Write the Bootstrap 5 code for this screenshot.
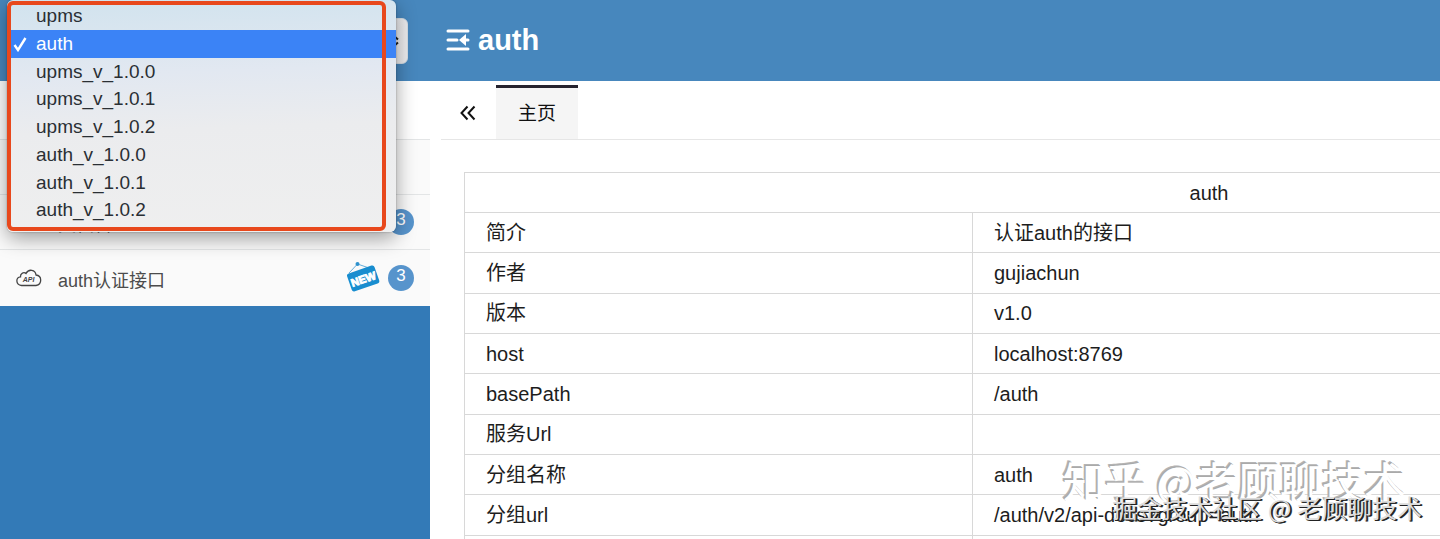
<!DOCTYPE html>
<html lang="zh-CN">
<head>
<meta charset="utf-8">
<meta name="viewport" content="width=device-width, initial-scale=1">
<title>auth</title>
<link href="https://cdn.jsdelivr.net/npm/bootstrap@5.3.0/dist/css/bootstrap.min.css" rel="stylesheet">
<style>
  body { font-family: "Liberation Sans", "Noto Sans CJK SC", sans-serif; font-size: 20px; line-height: 28px; color: #1d1d1d; background: #fff; }
  .topbar { height: 81px; background: #4787bd; }
  .brand-side, .side { width: 430px; flex: none; }
  .group-select { appearance: none; width: 388px; height: 46px; margin-left: 20px; font-size: 19px; border: 1px solid #d5dde4; border-radius: 6px;
    background: linear-gradient(90deg, #d4d4d6, #ececee); }
  .select-arrows { right: 31px; top: 17px; }
  .title-text { font-size: 29px; line-height: 36px; color: #fff; padding-bottom: 2px; }
  .side { background: #337ab7; }
  .side-item { height: 55px; padding: 0 16px; font-size: 18px; color: #4c4c4c; background: #fafafa; border: 0; border-bottom: 1px solid #e3e5e6; text-decoration: none; }
  .side-item.search-row { height: 59px; background: #fff; }
  .side-item:last-child { height: 56px; border-bottom: 0; }
  .side-item .label-text { margin-left: 16px; padding-top: 6px; }
  .count { width: 26px; height: 26px; line-height: 22px; font-size: 17px; font-weight: 400; padding: 0; background: #5794cc; }
  .group-menu { left: 7px; top: 0; width: 389px; height: 232px; padding: 2px 0 8px 4px; z-index: 5; border-radius: 6px;
    background: linear-gradient(178deg, #d1e3ee 0, #e2e8f1 32%, #ebecee 55%, #efefef 100%); box-shadow: 0 6px 20px rgba(0,0,0,.38), 0 0 2px rgba(0,0,0,.35); }
  .group-menu .options { min-height: 222px; grid-auto-rows: 1fr; }
  .group-menu button { border: 0; background: none; padding: 0; font-size: 19px; line-height: 27px; color: #2a2f34; text-align: left; }
  .group-menu button.picked { background: #3b83f6; color: #fff; }
  .tick { width: 25px; padding-left: 2px; flex: none; }
  .frame { left: 0; top: 1px; width: 379px; bottom: 1px; border: 4px solid #e8481c; border-radius: 6px; pointer-events: none; }
  .tabs { height: 59px; padding: 4px 0 0 30px; }
  .tabs::after { content: ""; position: absolute; left: 11px; right: 0; bottom: 0; height: 1px; background: #e6e6e6; }
  .collapse-btn { border: 0; background: none; padding: 0; width: 16px; height: 52px; }
  .tab-home { height: 55px; margin-left: 20px; width: 82px; border: 0; border-top: 3px solid #26232e; background: #f5f5f5; font-size: 19px; color: #111; padding: 0; }
  .content-area { padding: 32px 0 0 34px; }
  .info { min-width: 1490px; height: 404px; table-layout: fixed; border-collapse: collapse; margin: 0; color: #1d1d1d; }
  .info td, .info th { border: 1px solid #d8d8d8; padding: 5px 21px; font-weight: 400; vertical-align: middle; height: 40px; }
  .info col.key { width: 508px; }
  .wm-a, .wm-b { white-space: nowrap; pointer-events: none; font-family: "Noto Sans CJK SC", sans-serif; }
  .wm-a { right: 34px; bottom: 38px; font-size: 42px; line-height: 42px; color: #fff; text-shadow: -1px -1px 0 #aaa, -2px -2px 0 #b4b4b4; }
  .wm-b { right: 18px; bottom: 18px; font-size: 25px; line-height: 28px; color: #ddd; text-shadow: 1px 1px 0 #222, 2px 1px 0 #333; }
</style>
</head>
<body class="vh-100 overflow-hidden d-flex flex-column position-relative">
<header class="topbar d-flex align-items-center flex-shrink-0">
  <div class="brand-side position-relative">
    <select class="group-select" aria-label="分组"><option>auth</option></select>
    <svg class="select-arrows position-absolute" width="10" height="12" viewBox="0 0 10 12" fill="none" stroke="#222" stroke-width="2"><path d="M1 4.500 5 1l4 3.500M1 7.500 5 11l4-3.500"/></svg>
  </div>
  <h1 class="d-flex align-items-center gap-2 m-0 fw-bold title-text ps-3">
    <svg width="24" height="22" viewBox="0 0 24 22" fill="none" stroke="#fff" stroke-width="3" stroke-linecap="round"><path d="M2 2h20M2 11h9M2 20h20M17 11h5"/><path fill="#fff" stroke="none" d="M13 11l7-6v12z"/></svg>
    auth
  </h1>
</header>
<div class="d-flex flex-grow-1 overflow-hidden">
  <nav class="side" aria-label="菜单">
    <div class="side-item search-row"></div>
    <div class="side-item"></div>
    <a href="#" class="side-item d-flex align-items-center">
      <svg width="26" height="22" viewBox="0 0 26 22" fill="none" stroke="#444" stroke-width="2"><path d="M1 3v16h10M1 3h20v4"/><circle cx="19" cy="16" r="4" stroke-dasharray="3 2"/></svg>
      <span class="label-text">文档管理</span><span class="badge rounded-circle count ms-auto">3</span>
    </a>
    <a href="#" class="side-item d-flex align-items-center">
      <svg width="26" height="18" viewBox="0 0 26 18"><path fill="none" stroke="#444" stroke-width="1.300" d="M5.500 16.500C-.5 16-.5 8 4.500 7.800 4.200 4 8 2.700 10 4.500 12.500-.5 19.500.5 20 6c6 .500 6.500 9.500 0 10.500z"/><text x="12.500" y="13" text-anchor="middle" font-size="7" font-weight="700" font-style="italic" font-family="Liberation Sans, sans-serif" fill="#444">API</text></svg>
      <span class="label-text">auth认证接口</span>
      <svg class="ms-auto" width="34" height="34" viewBox="0 0 34 34"><path d="M3 12 11.500 3 26 8" fill="none" stroke="#65aedb" stroke-width="1"/><circle cx="11.500" cy="3" r="2" fill="#2e91cd"/><g transform="rotate(-19 17 17)"><rect x="2.500" y="8" width="29" height="19" rx="2.500" fill="#188dcf"/><text x="17" y="22" text-anchor="middle" font-size="11" font-weight="700" font-family="Liberation Sans, sans-serif" fill="#fff" stroke="#fff" stroke-width=".9">NEW</text></g></svg>
      <span class="badge rounded-circle count ms-2">3</span>
    </a>
  </nav>
  <main class="flex-grow-1 overflow-hidden">
    <div class="tabs d-flex position-relative">
      <button class="collapse-btn" aria-label="收起"><svg width="16" height="16" viewBox="0 0 16 16" fill="none" stroke="#111" stroke-width="2"><path d="M7.500 1.500 1.500 8l6 6.500M14.500 1.500 8.500 8l6 6.500"/></svg></button>
      <button class="tab-home">主页</button>
    </div>
    <div class="content-area">
      <table class="info">
        <colgroup><col class="key"><col></colgroup>
        <thead><tr><th colspan="2" class="text-center">auth</th></tr></thead>
        <tbody>
          <tr><td>简介</td><td>认证auth的接口</td></tr>
          <tr><td>作者</td><td>gujiachun</td></tr>
          <tr><td>版本</td><td>v1.0</td></tr>
          <tr><td>host</td><td>localhost:8769</td></tr>
          <tr><td>basePath</td><td>/auth</td></tr>
          <tr><td>服务Url</td><td></td></tr>
          <tr><td>分组名称</td><td>auth</td></tr>
          <tr><td>分组url</td><td>/auth/v2/api-docs?group=auth</td></tr>
          <tr><td></td><td></td></tr>
        </tbody>
      </table>
    </div>
  </main>
</div>
<div class="group-menu position-absolute">
  <div class="options d-grid">
    <button class="d-flex"><span class="tick"></span>upms</button>
    <button class="d-flex picked"><span class="tick"><svg width="14" height="15" viewBox="0 0 14 15" fill="none" stroke="#fff" stroke-width="2.400"><path d="M1.500 8 5 13 12.500 1"/></svg></span>auth</button>
    <button class="d-flex"><span class="tick"></span>upms_v_1.0.0</button>
    <button class="d-flex"><span class="tick"></span>upms_v_1.0.1</button>
    <button class="d-flex"><span class="tick"></span>upms_v_1.0.2</button>
    <button class="d-flex"><span class="tick"></span>auth_v_1.0.0</button>
    <button class="d-flex"><span class="tick"></span>auth_v_1.0.1</button>
    <button class="d-flex"><span class="tick"></span>auth_v_1.0.2</button>
  </div>
  <div class="frame position-absolute"></div>
</div>
<div class="wm-a position-absolute">知乎 @老顾聊技术</div>
<div class="wm-b position-absolute">掘金技术社区 @ 老顾聊技术</div>
<script src="https://cdn.jsdelivr.net/npm/bootstrap@5.3.0/dist/js/bootstrap.bundle.min.js"></script>
</body>
</html>
